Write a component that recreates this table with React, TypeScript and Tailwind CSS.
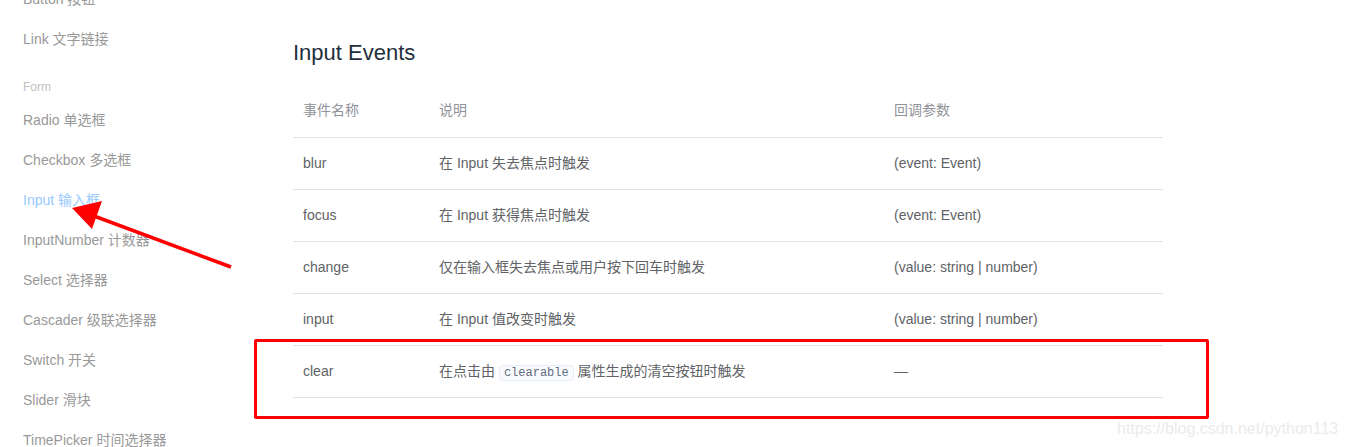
const navItems = [
  { label: "Button 按钮" },
  { label: "Link 文字链接" },
];

const formItems = [
  { label: "Radio 单选框" },
  { label: "Checkbox 多选框" },
  { label: "Input 输入框", active: true },
  { label: "InputNumber 计数器" },
  { label: "Select 选择器" },
  { label: "Cascader 级联选择器" },
  { label: "Switch 开关" },
  { label: "Slider 滑块" },
  { label: "TimePicker 时间选择器" },
];

const rows = [
  { name: "blur", desc: "在 Input 失去焦点时触发", args: "(event: Event)" },
  { name: "focus", desc: "在 Input 获得焦点时触发", args: "(event: Event)" },
  { name: "change", desc: "仅在输入框失去焦点或用户按下回车时触发", args: "(value: string | number)" },
  { name: "input", desc: "在 Input 值改变时触发", args: "(value: string | number)" },
];

export default function App() {
  return (
    <div
      className="relative h-[447px] w-[1346px] overflow-hidden bg-white"
      style={{ fontFamily: '"Liberation Sans", "Noto Sans CJK SC", sans-serif' }}
    >
      <div className="flex">
        {/* sidebar */}
        <div className="mt-[-21px] w-[293px] shrink-0 pl-[23px] text-[14px] text-[#999]">
          {navItems.map((it) => (
            <div key={it.label} className="flex h-[40px] items-center">
              {it.label}
            </div>
          ))}
          <div className="pt-[21px] pb-[6px] text-[12px] leading-[14px] text-[#c0c0c0]">Form</div>
          {formItems.map((it) => (
            <div
              key={it.label}
              className={
                "flex h-[40px] items-center " + (it.active ? "text-[#99c9ff]" : "")
              }
            >
              {it.label}
            </div>
          ))}
        </div>

        {/* main */}
        <div className="flex-1 pt-[38px]">
          <h3 className="text-[22px] leading-[30px] text-[#1f2f3d]">Input Events</h3>
          <table className="mt-[17px] w-[870px] border-collapse text-[14px]">
            <thead>
              <tr className="h-[52px] border-b border-[#e0e2e7] text-left text-[#909399]">
                <th className="w-[136px] px-[10px] font-normal">事件名称</th>
                <th className="w-[455px] px-[10px] font-normal">说明</th>
                <th className="px-[10px] font-normal">回调参数</th>
              </tr>
            </thead>
            <tbody className="text-[#606266]">
              {rows.map((r) => (
                <tr key={r.name} className="h-[52px] border-b border-[#e0e2e7]">
                  <td className="px-[10px]">{r.name}</td>
                  <td className="px-[10px]">{r.desc}</td>
                  <td className="px-[10px]">{r.args}</td>
                </tr>
              ))}
              <tr className="h-[52px] border-b border-[#e0e2e7]">
                <td className="px-[10px]">clear</td>
                <td className="px-[10px]">
                  在点击由{" "}
                  <code
                    className="rounded-[4px] border border-[#eaeefb] bg-[#f9fafc] px-[4px] text-[12px] text-[#5e6d82]"
                    style={{ fontFamily: '"Liberation Mono", monospace' }}
                  >
                    clearable
                  </code>{" "}
                  属性生成的清空按钮时触发
                </td>
                <td className="px-[10px]">—</td>
              </tr>
            </tbody>
          </table>
        </div>
      </div>

      {/* annotations */}
      <div className="absolute left-[254px] top-[339px] h-[80px] w-[955px] rounded-[2px] border-[3px] border-[#ff0000]" />
      <svg className="absolute left-0 top-0" width="260" height="290" viewBox="0 0 260 290">
        <line x1="231" y1="267" x2="94" y2="216" stroke="#ff0000" strokeWidth="3.5" />
        <polygon points="72,208 102,201 92,229" fill="#ff0000" />
      </svg>

      <div className="absolute left-[1117px] top-[419px] text-[16px] leading-[20px] text-[#ebebeb]">
        https://blog.csdn.net/python113
      </div>
    </div>
  );
}
